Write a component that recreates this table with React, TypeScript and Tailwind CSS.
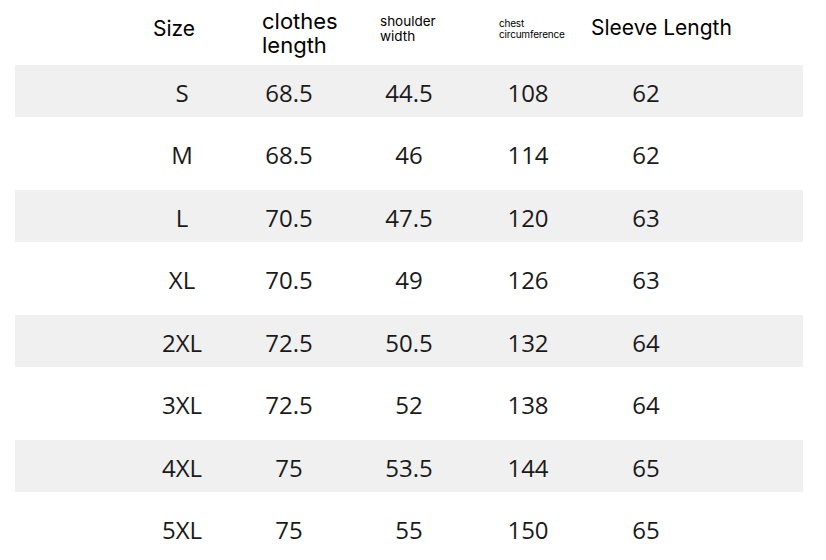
import React from 'react';

const rows = [
  ['S', '68.5', '44.5', '108', '62'],
  ['M', '68.5', '46', '114', '62'],
  ['L', '70.5', '47.5', '120', '63'],
  ['XL', '70.5', '49', '126', '63'],
  ['2XL', '72.5', '50.5', '132', '64'],
  ['3XL', '72.5', '52', '138', '64'],
  ['4XL', '75', '53.5', '144', '65'],
  ['5XL', '75', '55', '150', '65'],
];

const colWidths = ['w-[108px]', 'w-[106px]', 'w-[134px]', 'w-[104px]', 'w-[132px]'];

export default function App() {
  return (
    <div className="h-[560px] w-[826px] overflow-hidden bg-white text-[#1a1a1a]" style={{ fontFamily: '"Open Sans", "Noto Sans", sans-serif' }}>
      {/* Header */}
      <div className="flex h-[60px] items-center pl-[153px] text-black" style={{ fontFamily: 'Inter, "Noto Sans", sans-serif' }}>
        <div className="w-[109px] -mt-[3px] text-[21px]">Size</div>
        <div className="w-[118px] mt-[5px] text-[22px] leading-[24px]">
          clothes
          <br />
          length
        </div>
        <div className="w-[119px] -mt-[3px] text-[13.5px] leading-[15px]">
          shoulder
          <br />
          width
        </div>
        <div className="w-[92px] -mt-[2px] text-[10px] leading-[11px] tracking-[-0.2px]">
          chest
          <br />
          circumference
        </div>
        <div className="-mt-[4px] text-[21px]">Sleeve Length</div>
      </div>

      {/* Rows */}
      {rows.map((row, i) => (
        <div key={row[0]} className="flex h-[62.5px] items-center pl-[15px] pr-[23px]">
          <div className={`flex h-[52px] w-full items-center pl-[113px] pt-[3px] text-[24px] ${i % 2 === 0 ? 'bg-[#f0f0f0]' : ''}`}>
            {row.map((cell, j) => (
              <div key={j} className={`${colWidths[j]} text-center`}>
                {cell}
              </div>
            ))}
          </div>
        </div>
      ))}
    </div>
  );
}
